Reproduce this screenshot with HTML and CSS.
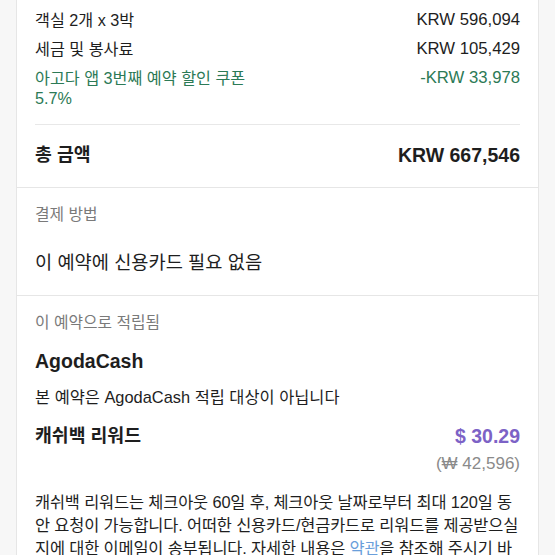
FILE: index.html
```html
<!DOCTYPE html>
<html lang="ko">
<head>
<meta charset="utf-8">
<link rel="stylesheet" href="styles.css">
</head>
<body>
<main class="sheet">
  <section class="card card-price">
    <div class="row">
      <span class="label">객실 2개 x 3박</span>
      <span class="amount">KRW 596,094</span>
    </div>
    <div class="row">
      <span class="label">세금 및 봉사료</span>
      <span class="amount">KRW 105,429</span>
    </div>
    <div class="row row-discount">
      <span class="label">아고다 앱 3번째 예약 할인 쿠폰 5.7%</span>
      <span class="amount">-KRW 33,978</span>
    </div>
    <div class="divider"></div>
    <div class="row row-total">
      <span class="label">총 금액</span>
      <span class="amount">KRW 667,546</span>
    </div>
  </section>

  <section class="card card-payment">
    <div class="caption">결제 방법</div>
    <div class="payment-text">이 예약에 신용카드 필요 없음</div>
  </section>

  <section class="card card-rewards">
    <div class="caption">이 예약으로 적립됨</div>
    <div class="brand">AgodaCash</div>
    <div class="note">본 예약은 AgodaCash 적립 대상이 아닙니다</div>
    <div class="row row-cashback">
      <span class="label">캐쉬백 리워드</span>
      <span class="amount">$ 30.29</span>
    </div>
    <div class="converted">(₩ 42,596)</div>
    <p class="terms">캐쉬백 리워드는 체크아웃 60일 후, 체크아웃 날짜로부터 최대 120일 동안 요청이 가능합니다. 어떠한 신용카드/현금카드로 리워드를 제공받으실지에 대한 이메일이 송부됩니다. 자세한 내용은 <a class="link" href="#">약관</a>을 참조해 주시기 바랍니다.</p>
  </section>
</main>
</body>
</html>
```
FILE: styles.css
```css
html, body {
  margin: 0;
  padding: 0;
}

body {
  background: #f7f7f7;
  font-family: "Liberation Sans", "Noto Sans CJK KR", sans-serif;
  color: #1e1e1e;
  height: 555px;
  overflow: hidden;
}

.sheet {
  margin: 0 16px;
  background: #ffffff;
  border-left: 1px solid #e6e6e6;
  border-right: 1px solid #e6e6e6;
  min-height: 555px;
}

.card {
  padding: 0 18px;
  border-bottom: 1px solid #e6e6e6;
}

.row {
  display: flex;
  justify-content: space-between;
  align-items: flex-start;
}

.row .label {
  font-size: 16.2px;
  line-height: 20px;
  max-width: 230px;
}

.row .amount {
  font-size: 16.7px;
  line-height: 20px;
  white-space: nowrap;
}

/* price card */
.card-price {
  padding-top: 10px;
  padding-bottom: 20px;
}

.card-price .row + .row {
  margin-top: 9px;
}

.row-discount {
  color: #2c7a56;
}

.divider {
  height: 1px;
  background: #e8e8e8;
  margin: 16px 0 18px;
}

.row-total .label,
.row-cashback .label {
  font-weight: 700;
  font-size: 18.3px;
  line-height: 24px;
}

.row-total .amount,
.row-cashback .amount {
  font-weight: 700;
  font-size: 19.5px;
  line-height: 24px;
}

/* payment card */
.caption {
  font-size: 15.8px;
  line-height: 20px;
  color: #7a7a7a;
}

.card-payment {
  padding-top: 17px;
  padding-bottom: 20px;
}

.payment-text {
  margin-top: 26px;
  font-size: 18.7px;
  line-height: 24px;
}

/* rewards card */
.card-rewards {
  padding-top: 17px;
  padding-bottom: 20px;
}

.brand {
  margin-top: 16px;
  font-size: 19.5px;
  line-height: 24px;
  font-weight: 700;
}

.note {
  margin-top: 14px;
  font-size: 16.4px;
  line-height: 20px;
}

.row-cashback {
  margin-top: 17px;
}

.row-cashback .amount {
  color: #7c62c6;
}

.converted {
  margin-top: 6px;
  text-align: right;
  font-size: 17px;
  line-height: 20px;
  color: #8a8a8a;
}

.terms {
  margin: 17px 0 0;
  font-size: 16.4px;
  line-height: 23px;
  letter-spacing: -0.15px;
}

.link {
  color: #6a9fdb;
  text-decoration: none;
}
```
